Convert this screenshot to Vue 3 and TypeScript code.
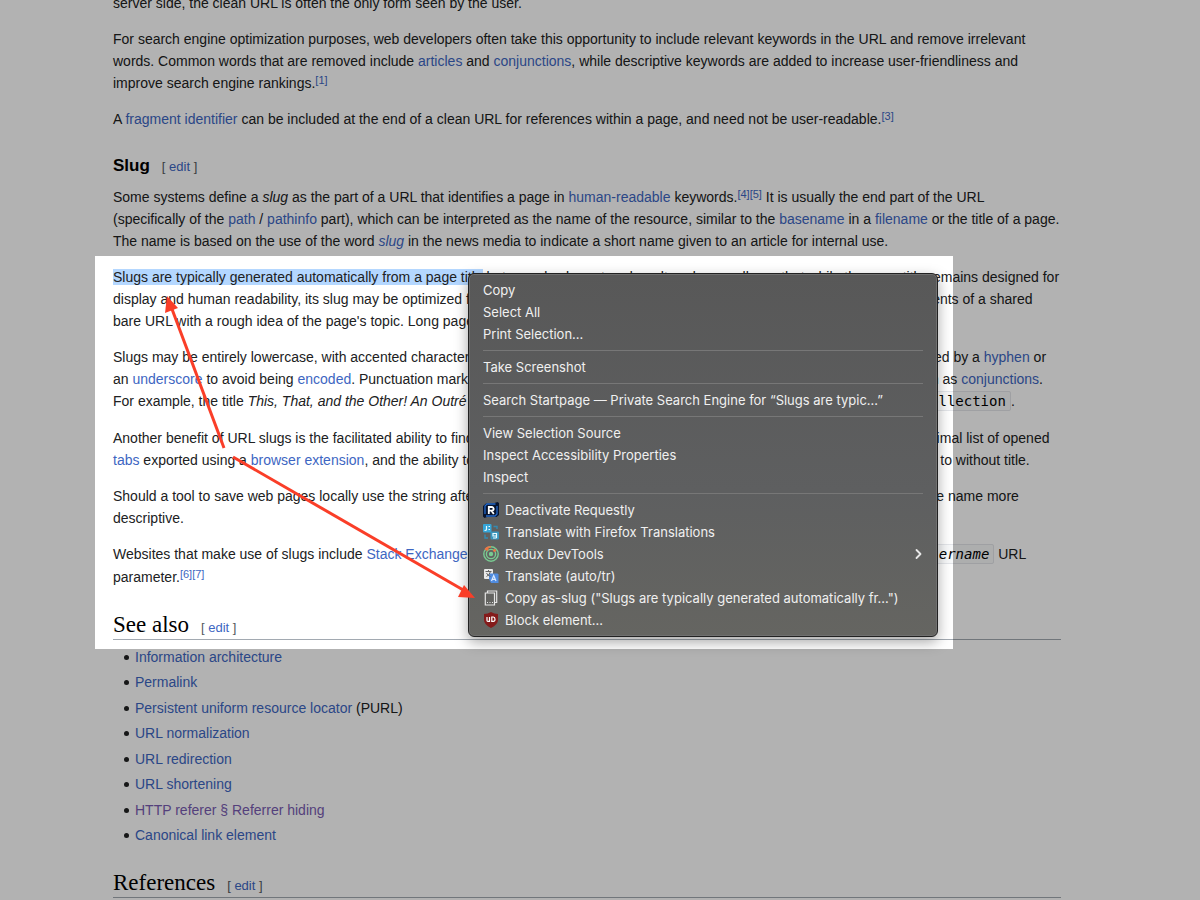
<script setup lang="ts">
interface MenuItem {
  label: string
  icon?: 'requestly' | 'firefox' | 'redux' | 'translate' | 'copy' | 'ublock'
  submenu?: boolean
}

interface RelatedLink {
  label: string
  note?: string
  visited?: boolean
}

const menuGroups: MenuItem[][] = [
  [{ label: 'Copy' }, { label: 'Select All' }, { label: 'Print Selection…' }],
  [{ label: 'Take Screenshot' }],
  [{ label: 'Search Startpage — Private Search Engine for “Slugs are typic…”' }],
  [{ label: 'View Selection Source' }, { label: 'Inspect Accessibility Properties' }, { label: 'Inspect' }],
  [
    { label: 'Deactivate Requestly', icon: 'requestly' },
    { label: 'Translate with Firefox Translations', icon: 'firefox' },
    { label: 'Redux DevTools', icon: 'redux', submenu: true },
    { label: 'Translate (auto/tr)', icon: 'translate' },
    { label: 'Copy as-slug ("Slugs are typically generated automatically fr…")', icon: 'copy' },
    { label: 'Block element…', icon: 'ublock' },
  ],
]

const related: RelatedLink[] = [
  { label: 'Information architecture' },
  { label: 'Permalink' },
  { label: 'Persistent uniform resource locator', note: '(PURL)' },
  { label: 'URL normalization' },
  { label: 'URL redirection' },
  { label: 'URL shortening' },
  { label: 'HTTP referer § Referrer hiding', visited: true },
  { label: 'Canonical link element' },
]
</script>

<template>
  <div class="page">
    <main class="article">
      <p>server side, the clean URL is often the only form seen by the user.</p>
      <p>
        For search engine optimization purposes, web developers often take this opportunity to include relevant keywords
        in the URL and remove irrelevant words. Common words that are removed include <a href="#">articles</a> and
        <a href="#">conjunctions</a>, while descriptive keywords are added to increase user-friendliness and improve
        search engine rankings.<sup><a href="#">[1]</a></sup>
      </p>
      <p>
        A <a href="#">fragment identifier</a> can be included at the end of a clean URL for references within a page,
        and need not be user-readable.<sup><a href="#">[3]</a></sup>
      </p>

      <h3>Slug <span class="edit">[ <a href="#">edit</a> ]</span></h3>
      <p>
        Some systems define a <i>slug</i> as the part of a URL that identifies a page in
        <a href="#">human-readable</a> keywords.<sup><a href="#">[4]</a><a href="#">[5]</a></sup> It is usually the end
        part of the URL (specifically&nbsp;of the <a href="#">path</a> / <a href="#">pathinfo</a> part), which can be
        interpreted as the name of the resource, similar to the <a href="#">basename</a> in a
        <a href="#">filename</a> or the title of a page. The name is based on the use of the word
        <a href="#"><i>slug</i></a> in the news media to indicate a short name given to an article for internal use.
      </p>
      <p>
        <span class="selected">Slugs are typically generated automatically from a page title</span> but can also be
        entered or altered manually, so that while the page title remains designed for display and human readability,
        its slug may be optimized for brevity or for consumption by search engines, as well as providing recipients of a
        shared bare URL with a rough idea of the page's topic. Long page titles may also be truncated to keep the final
        URL to a reasonable length.
      </p>
      <p>
        Slugs may be entirely lowercase, with accented characters replaced by letters from the Latin script and
        whitespace characters replaced by a <a href="#">hyphen</a> or an <a href="#">underscore</a> to avoid being
        <a href="#">encoded</a>. Punctuation marks are generally removed, and some also remove short, common words such
        as <a href="#">conjunctions</a>. For example, the title <i>This, That, and the Other! An Outré Collection</i>
        could have a generated slug of <code>this-that-other-outre-collection</code>.
      </p>
      <p>
        Another benefit of URL slugs is the facilitated ability to find a desired page out of a long list of URLs
        without page titles, such as a minimal list of opened <a href="#">tabs</a> exported using a
        <a href="#">browser extension</a>, and the ability to preview the approximate title of a target page in the
        browser if hyperlinked to without title.
      </p>
      <p>
        Should a tool to save web pages locally use the string after the last slash as the default file name, like wget
        does, a slug makes the file name more descriptive.
      </p>
      <p>
        Websites that make use of slugs include <a href="#">Stack Exchange Network</a> with question title after slash,
        and <a href="#">Instagram</a> with <code>?taken-by=<i>username</i></code> URL
        parameter.<sup><a href="#">[6]</a><a href="#">[7]</a></sup>
      </p>

      <h2>See also <span class="edit">[ <a href="#">edit</a> ]</span></h2>
      <ul>
        <li v-for="link in related" :key="link.label">
          <a href="#" :class="{ visited: link.visited }">{{ link.label }}</a>{{ link.note ? ' ' + link.note : '' }}
        </li>
      </ul>

      <h2>References <span class="edit">[ <a href="#">edit</a> ]</span></h2>
    </main>

    <div class="spotlight"></div>

    <div class="menu" role="menu">
      <div v-for="(group, g) in menuGroups" :key="g" class="group" role="group">
        <button v-for="item in group" :key="item.label" type="button" role="menuitem">
          <svg v-if="item.icon === 'requestly'" class="icon" viewBox="0 0 16 16">
            <path d="M3 1.500 11.500 1l3-1L16 1v12l-2.500 2H4l-2.500 1L0 14.500V4z" fill="#08142e" />
            <path d="M2 12V4l2-2h8.500M3 14h9l2-2V4" fill="none" stroke="#2468c8" stroke-width="1.300" />
            <path d="M5.800 12V5h3a1.800 1.800 0 0 1 0 3.700H6M8.500 8.700l2.300 3.300" fill="none" stroke="#fff" stroke-width="1.800" />
          </svg>
          <svg v-else-if="item.icon === 'firefox'" class="icon" viewBox="0 0 16 16">
            <rect width="8.500" height="8.500" rx="1" fill="#35a5d8" />
            <rect x="7.500" y="7.500" width="8.500" height="8" rx="1" fill="#3996bd" />
            <path d="M3.500 2v3.500q0 1-2 1M5.500 2.500H7M5.500 5.500H7M13.500 9v5M13.500 9.500H10V12h3.500M10 14h3.500" fill="none" stroke="#e8faff" stroke-width="1.200" />
            <path d="M10.500 2.500H14V5M2 10.500V14h3" fill="none" stroke="#348bb2" stroke-width="1.400" />
          </svg>
          <svg v-else-if="item.icon === 'redux'" class="icon" viewBox="0 0 16 16">
            <g fill="none" stroke="#79ca91" stroke-width="1.400">
              <circle cx="8" cy="8" r="7.200" />
              <circle cx="8" cy="8" r="4.600" />
              <path d="M2 3.500A7.200 7.200 0 0 1 8 .8" stroke="#ef7544" />
            </g>
            <circle cx="8" cy="8" r="2.200" fill="#79ca91" />
            <circle cx="4" cy="3" r="1.700" fill="#ef7544" />
            <circle cx="11.500" cy="4.500" r="1.400" fill="#ef7544" />
          </svg>
          <svg v-else-if="item.icon === 'translate'" class="icon" viewBox="0 0 16 16">
            <rect x="1" y="1" width="9" height="10" rx="1" fill="#e9e9e9" />
            <path d="M6 5.500h8.500l1 1V15H8l-2-4z" fill="#508ce0" />
            <path d="M2.500 3.500h6M5.500 2v1.500M3.500 8.500q3-1.500 4-5M3.500 5q1 2.500 4 3.500" fill="none" stroke="#666" stroke-width="1" />
            <path d="m8.500 13 2.200-5.500L13 13M9.300 11.300h3" fill="none" stroke="#dbeaff" stroke-width="1.200" />
          </svg>
          <svg v-else-if="item.icon === 'copy'" class="icon" viewBox="0 0 16 16">
            <path d="M4.500 2.700V1h9.200v11.500h-1.900M2.300 3h9.200v12H2.300z" fill="none" stroke="#e5e5e5" stroke-width="1.200" />
            <path d="M4 12.500h1M6.500 12.500h1M9 12.500h1" stroke="#e5e5e5" stroke-width="1" />
          </svg>
          <svg v-else-if="item.icon === 'ublock'" class="icon" viewBox="0 0 16 16">
            <path d="M8 0Q11 2 15 2v6q0 4.500-7 8-7-3.500-7-8V2Q5 2 8 0z" fill="#841b1b" />
            <path d="M4 5v3.500q0 .8.800.800h1.700V5M8.800 5v4.300h1.500q1.700 0 1.700-2.100T10.300 5z" fill="none" stroke="#fff" stroke-width="1.200" />
          </svg>
          <span>{{ item.label }}</span>
          <svg v-if="item.submenu" class="chevron" viewBox="0 0 8 12">
            <path d="m1.500 2 4 4-4 4" fill="none" stroke="#e8e8e8" stroke-width="1.800" stroke-linecap="round" stroke-linejoin="round" />
          </svg>
        </button>
      </div>
    </div>

    <svg class="arrows" viewBox="0 0 312 304" aria-hidden="true">
      <g stroke="#fa3e28" stroke-width="3">
        <path d="M59 152 7 13" />
        <path d="m68 161 232 134" />
      </g>
      <g fill="#fa3e28">
        <path d="M2 0 0 17l13-5z" />
        <path d="m310 302-11-13-6 12z" />
      </g>
    </svg>
  </div>
</template>

<style>
body {
  margin: 0;
  background: #fff;
}
</style>

<style scoped>
.page {
  position: relative;
  height: 100vh;
  overflow: hidden;
  font-family: "Liberation Sans", Arial, sans-serif;
  font-size: 14px;
  line-height: 22px;
  color: #202122;
}

.article {
  margin: -8px 139px 0 113px;
}

p {
  margin: 0 0 14px;
}

a {
  color: #3d66c2;
  text-decoration: none;
}

a.visited {
  color: #795cb2;
}

sup {
  font-size: 11px;
  line-height: 1;
  vertical-align: 4px;
}

code {
  padding: 1px 4px;
  border: 1px solid #e4e6ea;
  border-radius: 2px;
  background: #f8f9fa;
  color: #000;
  font-family: "DejaVu Sans Mono", monospace;
  font-size: 14px;
  line-height: 23px;
}

.selected {
  background: #b4d7ff;
}

h2,
h3 {
  display: flex;
  align-items: baseline;
  gap: 12px;
  color: #000;
}

h3 {
  margin: 23px 0 7px;
  font-size: 17px;
  line-height: 25px;
}

h2 {
  margin: 26px 0 6px;
  border-bottom: 1px solid #a2a9b1;
  font-family: "Liberation Serif", serif;
  font-size: 23px;
  font-weight: 400;
  line-height: 22px;
}

.edit {
  color: #54595d;
  font-family: "Liberation Sans", Arial, sans-serif;
  font-size: 13px;
  font-weight: 400;
}

ul {
  margin: 0;
  padding-left: 11px;
  list-style: none;
}

li {
  margin-bottom: 3px;
}

li:nth-child(even) {
  margin-bottom: 4px;
}

li::before {
  content: "";
  display: inline-block;
  width: 5px;
  height: 5px;
  margin-right: 6px;
  border-radius: 50%;
  background: #202122;
  vertical-align: 2px;
}

.spotlight {
  position: absolute;
  top: 256px;
  left: 95px;
  width: 858px;
  height: 393px;
  box-shadow: 0 0 0 2000px rgba(0, 0, 0, 0.3);
}

.menu {
  position: absolute;
  top: 273px;
  left: 468px;
  box-sizing: border-box;
  width: 470px;
  padding: 5px 14px;
  border: 1px solid #222;
  border-radius: 6px;
  background: linear-gradient(#585858, #5e5f60 60%, #656561);
  box-shadow: inset 0 0 0 1px #707070, 0 5px 14px rgba(0, 0, 0, 0.35);
}

.group + .group {
  margin-top: 5px;
  padding-top: 5px;
  border-top: 1px solid #777;
}

button {
  display: flex;
  align-items: center;
  gap: 6px;
  width: 100%;
  height: 22px;
  padding: 0;
  border: 0;
  background: none;
  color: #f0f0f0;
  font-family: Inter, sans-serif;
  font-size: 13px;
  font-weight: 400;
  text-align: left;
  white-space: nowrap;
}

.icon {
  flex: none;
  width: 16px;
  height: 16px;
}

.chevron {
  width: 8px;
  height: 12px;
  margin-left: auto;
}

.arrows {
  position: absolute;
  top: 296px;
  left: 165px;
  width: 312px;
  height: 304px;
}
</style>
